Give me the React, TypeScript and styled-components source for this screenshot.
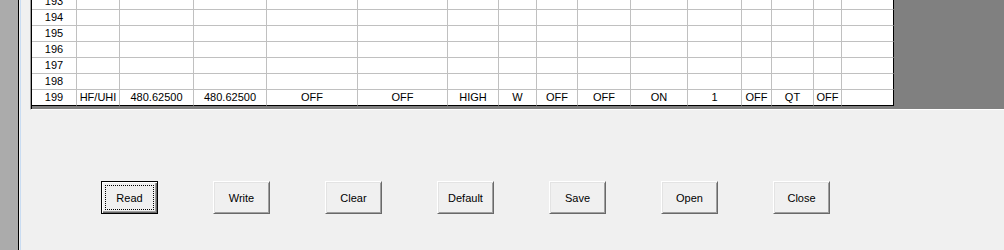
import styled, { createGlobalStyle } from "styled-components";

const GlobalStyle = createGlobalStyle`
  html, body {
    margin: 0;
    padding: 0;
    background: #f0f0f0;
    overflow: hidden;
  }
  body {
    font-family: "Liberation Sans", Arial, sans-serif;
    font-size: 11px;
  }
`;

const colWidths = [45, 43, 74, 73, 91, 90, 51, 38, 41, 53, 57, 54, 30, 42, 28, 52];

const lastRow = [
  "199", "HF/UHI", "480.62500", "480.62500", "OFF", "OFF", "HIGH", "W",
  "OFF", "OFF", "ON", "1", "OFF", "QT", "OFF", "",
];

const rows: string[][] = [
  ...[193, 194, 195, 196, 197, 198].map((n) => [String(n), ...Array(15).fill("")]),
  lastRow,
];

const buttons = ["Read", "Write", "Clear", "Default", "Save", "Open", "Close"];

const App = () => {
  return (
    <>
      <GlobalStyle />
      <Screen>
        <SideStrip />
        <Frame>
          <Form>
            <GridBox>
              <GridInner>
                <Viewport>
                  <Cells>
                    {rows.map((row, r) =>
                      row.map((txt, c) => (
                        <Cell
                          key={`${r}-${c}`}
                          $lastRow={r === rows.length - 1}
                          $lastCol={c === row.length - 1}
                        >
                          {txt}
                        </Cell>
                      ))
                    )}
                  </Cells>
                </Viewport>
              </GridInner>
            </GridBox>
            <ButtonBar>
              {buttons.map((b, i) => (
                <Button key={b} $default={i === 0}>
                  {b}
                </Button>
              ))}
            </ButtonBar>
          </Form>
        </Frame>
      </Screen>
    </>
  );
};
export default App;

const Screen = styled.div`
  display: flex;
  width: 1004px;
  height: 250px;
  overflow: hidden;
`;

const SideStrip = styled.div`
  width: 18px;
  flex: none;
  background: #ababab;
  border-right: 1px solid #000;
`;

const Frame = styled.div`
  flex: 1;
  padding-left: 1px;
  background: #f0f0f0;
  display: flex;
`;

const Form = styled.div`
  flex: 1;
  border-left: 1px solid #c9dcf2;
  padding-left: 9px;
  display: flex;
  flex-direction: column;
  min-width: 0;
`;

const GridBox = styled.div`
  border-left: 1px solid #a0a0a0;
  border-bottom: 1px solid #ffffff;
  background: #808080;
`;

const GridInner = styled.div`
  border-left: 1px solid #000;
  padding-bottom: 3px;
`;

const Viewport = styled.div`
  height: 106px;
  overflow: hidden;
  display: flex;
  flex-direction: column;
  justify-content: flex-end;
`;

const Cells = styled.div`
  display: grid;
  grid-template-columns: ${colWidths.map((w) => `${w}px`).join(" ")};
  grid-auto-rows: 16px;
  width: max-content;
`;

const Cell = styled.div<{ $lastRow: boolean; $lastCol: boolean }>`
  box-sizing: border-box;
  background: #fff;
  color: #000;
  border-right: 1px solid ${(p) => (p.$lastCol ? "#000" : "#c0c0c0")};
  border-bottom: 1px solid ${(p) => (p.$lastRow ? "#000" : "#c0c0c0")};
  line-height: 15px;
  text-align: center;
  white-space: nowrap;
  overflow: hidden;
`;

const ButtonBar = styled.div`
  display: flex;
  gap: 55px;
  margin-top: 71px;
  padding-left: 71px;
`;

const Button = styled.div<{ $default?: boolean }>`
  position: relative;
  box-sizing: border-box;
  width: 57px;
  height: 33px;
  display: flex;
  align-items: center;
  justify-content: center;
  background: #f0f0f0;
  color: #000;
  font-size: 11px;
  border-top: 1px solid ${(p) => (p.$default ? "#000" : "#fff")};
  border-left: 1px solid ${(p) => (p.$default ? "#000" : "#fff")};
  border-right: 1px solid ${(p) => (p.$default ? "#000" : "#696969")};
  border-bottom: 1px solid ${(p) => (p.$default ? "#000" : "#696969")};
  box-shadow: ${(p) =>
    p.$default
      ? "inset 1px 1px 0 #fff, inset -1px -1px 0 #696969, inset -2px -2px 0 #a0a0a0"
      : "inset 1px 1px 0 #e3e3e3, inset -1px -1px 0 #a0a0a0"};

  &::after {
    content: "";
    display: ${(p) => (p.$default ? "block" : "none")};
    position: absolute;
    inset: 3px;
    border: 1px dotted #000;
  }
`;
